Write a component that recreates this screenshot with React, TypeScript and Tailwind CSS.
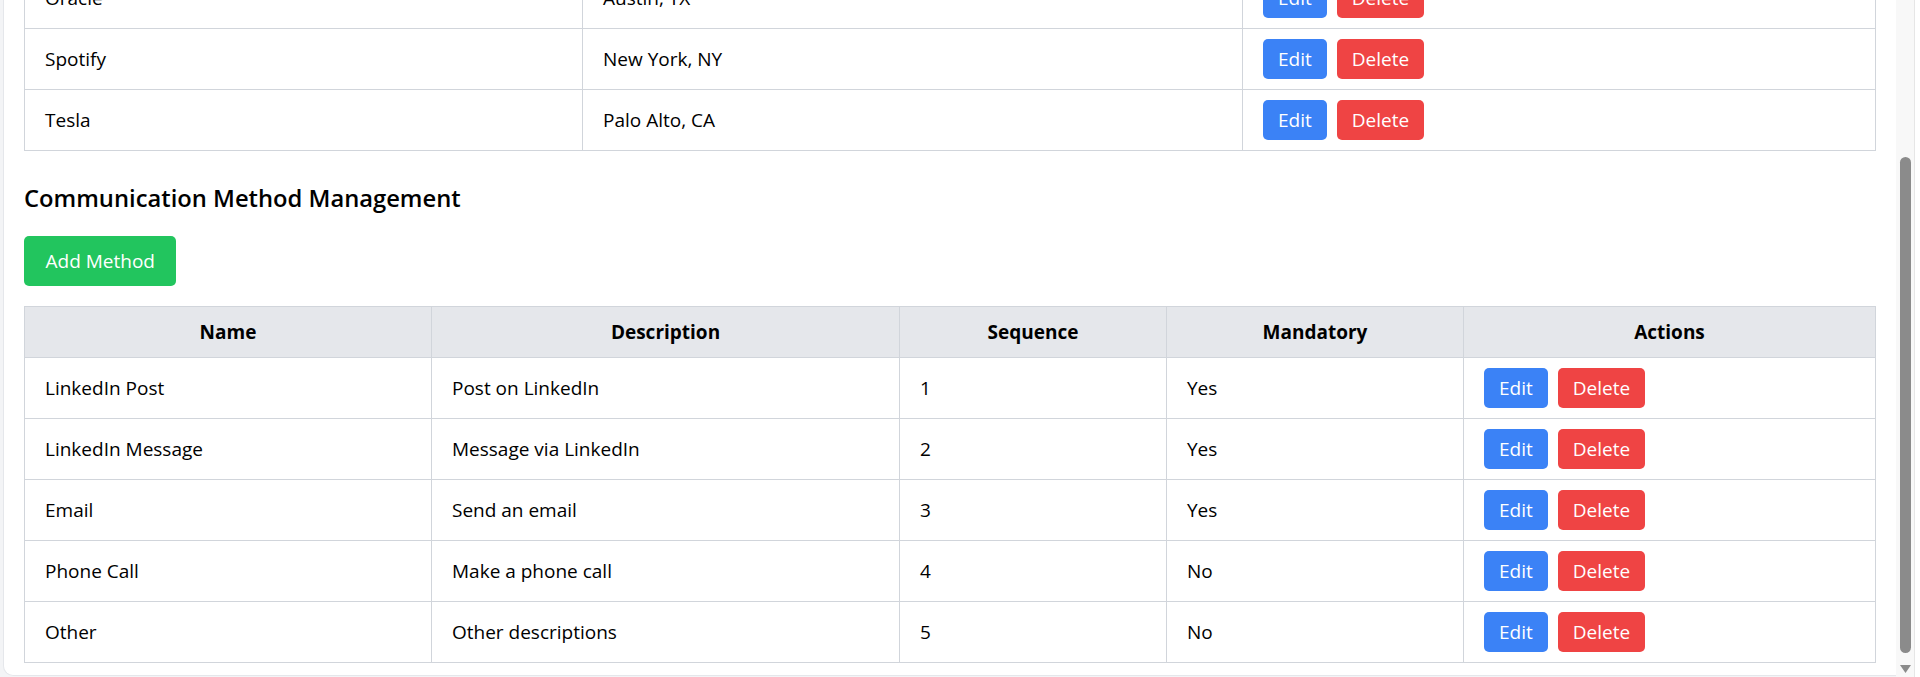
import React from "react";

const companies = [
  { name: "Google", loc: "Mountain View, CA" },
  { name: "Microsoft", loc: "Redmond, WA" },
  { name: "Amazon", loc: "Seattle, WA" },
  { name: "Apple", loc: "Cupertino, CA" },
  { name: "Oracle", loc: "Austin, TX" },
  { name: "Spotify", loc: "New York, NY" },
  { name: "Tesla", loc: "Palo Alto, CA" },
];

const methods = [
  { name: "LinkedIn Post", desc: "Post on LinkedIn", seq: 1, mand: "Yes" },
  { name: "LinkedIn Message", desc: "Message via LinkedIn", seq: 2, mand: "Yes" },
  { name: "Email", desc: "Send an email", seq: 3, mand: "Yes" },
  { name: "Phone Call", desc: "Make a phone call", seq: 4, mand: "No" },
  { name: "Other", desc: "Other descriptions", seq: 5, mand: "No" },
];

function Actions() {
  return (
    <div className="flex gap-[10px]">
      <button className="bg-[#3b82f6] text-white px-[15px] py-[5px] leading-[30px] rounded-[5px]">Edit</button>
      <button className="bg-[#ef4444] text-white px-[15px] py-[5px] leading-[30px] rounded-[5px]">Delete</button>
    </div>
  );
}

const td = "border border-[#d1d5db] px-[20px] py-[10px] align-middle text-left";
const th = "border border-[#d1d5db] px-[20px] py-[10px] font-bold text-center leading-[30px]";

export default function App() {
  return (
    <div className="flex h-[677px] w-[1920px] overflow-hidden font-['Open_Sans',sans-serif] text-[19px] leading-[30px] text-black">
      <div className="flex w-[1896px] flex-col justify-end overflow-hidden bg-[#f3f4f6] pl-[3px] pb-[1px]">
        <div className="rounded-bl-[10px] border-l border-b border-[#e5e7eb] bg-white pl-[20px] pr-[20px] pb-[12px] pt-[20px]">
          <h2 className="text-[23.75px] font-semibold leading-[35px] mb-[20px]">Company Management</h2>
          <button className="bg-[#22c55e] text-white px-[21.5px] py-[10px] leading-[30px] rounded-[5px] mb-[20px]">Add Company</button>
          <table className="w-[1852px] table-fixed border-collapse">
            <thead>
              <tr className="bg-[#e5e7eb]">
                <th className={th + " w-[558px]"}>Name</th>
                <th className={th + " w-[660px]"}>Location</th>
                <th className={th}>Actions</th>
              </tr>
            </thead>
            <tbody>
              {companies.map((c) => (
                <tr key={c.name}>
                  <td className={td}>{c.name}</td>
                  <td className={td}>{c.loc}</td>
                  <td className={td}><Actions /></td>
                </tr>
              ))}
            </tbody>
          </table>

          <h2 className="mt-[30px] mb-[20px] text-[23.75px] font-semibold leading-[35px]">Communication Method Management</h2>
          <button className="mb-[20px] rounded-[5px] bg-[#22c55e] px-[21.5px] py-[10px] leading-[30px] text-white">Add Method</button>
          <table className="w-[1852px] table-fixed border-collapse">
            <thead>
              <tr className="bg-[#e5e7eb]">
                <th className={th + " w-[407px]"}>Name</th>
                <th className={th + " w-[468px]"}>Description</th>
                <th className={th + " w-[267px]"}>Sequence</th>
                <th className={th + " w-[297px]"}>Mandatory</th>
                <th className={th}>Actions</th>
              </tr>
            </thead>
            <tbody>
              {methods.map((m) => (
                <tr key={m.name}>
                  <td className={td}>{m.name}</td>
                  <td className={td}>{m.desc}</td>
                  <td className={td}>{m.seq}</td>
                  <td className={td}>{m.mand}</td>
                  <td className={td}><Actions /></td>
                </tr>
              ))}
            </tbody>
          </table>
        </div>
      </div>
      <div className="flex w-[24px]">
        <div className="flex w-[19px] flex-col bg-[#f8f8f8] border-r border-[#e6e6e6]">
          <div className="ml-[4px] mt-[157px] h-[496px] w-[11px] rounded-full bg-[#8b8b8b]" />
          <svg className="ml-[4px] mt-[12px]" width="11" height="8" viewBox="0 0 11 8">
            <path d="M0 0 L11 0 L5.5 8 Z" fill="#8b8b8b" />
          </svg>
        </div>
        <div className="flex-1 bg-white" />
      </div>
    </div>
  );
}
